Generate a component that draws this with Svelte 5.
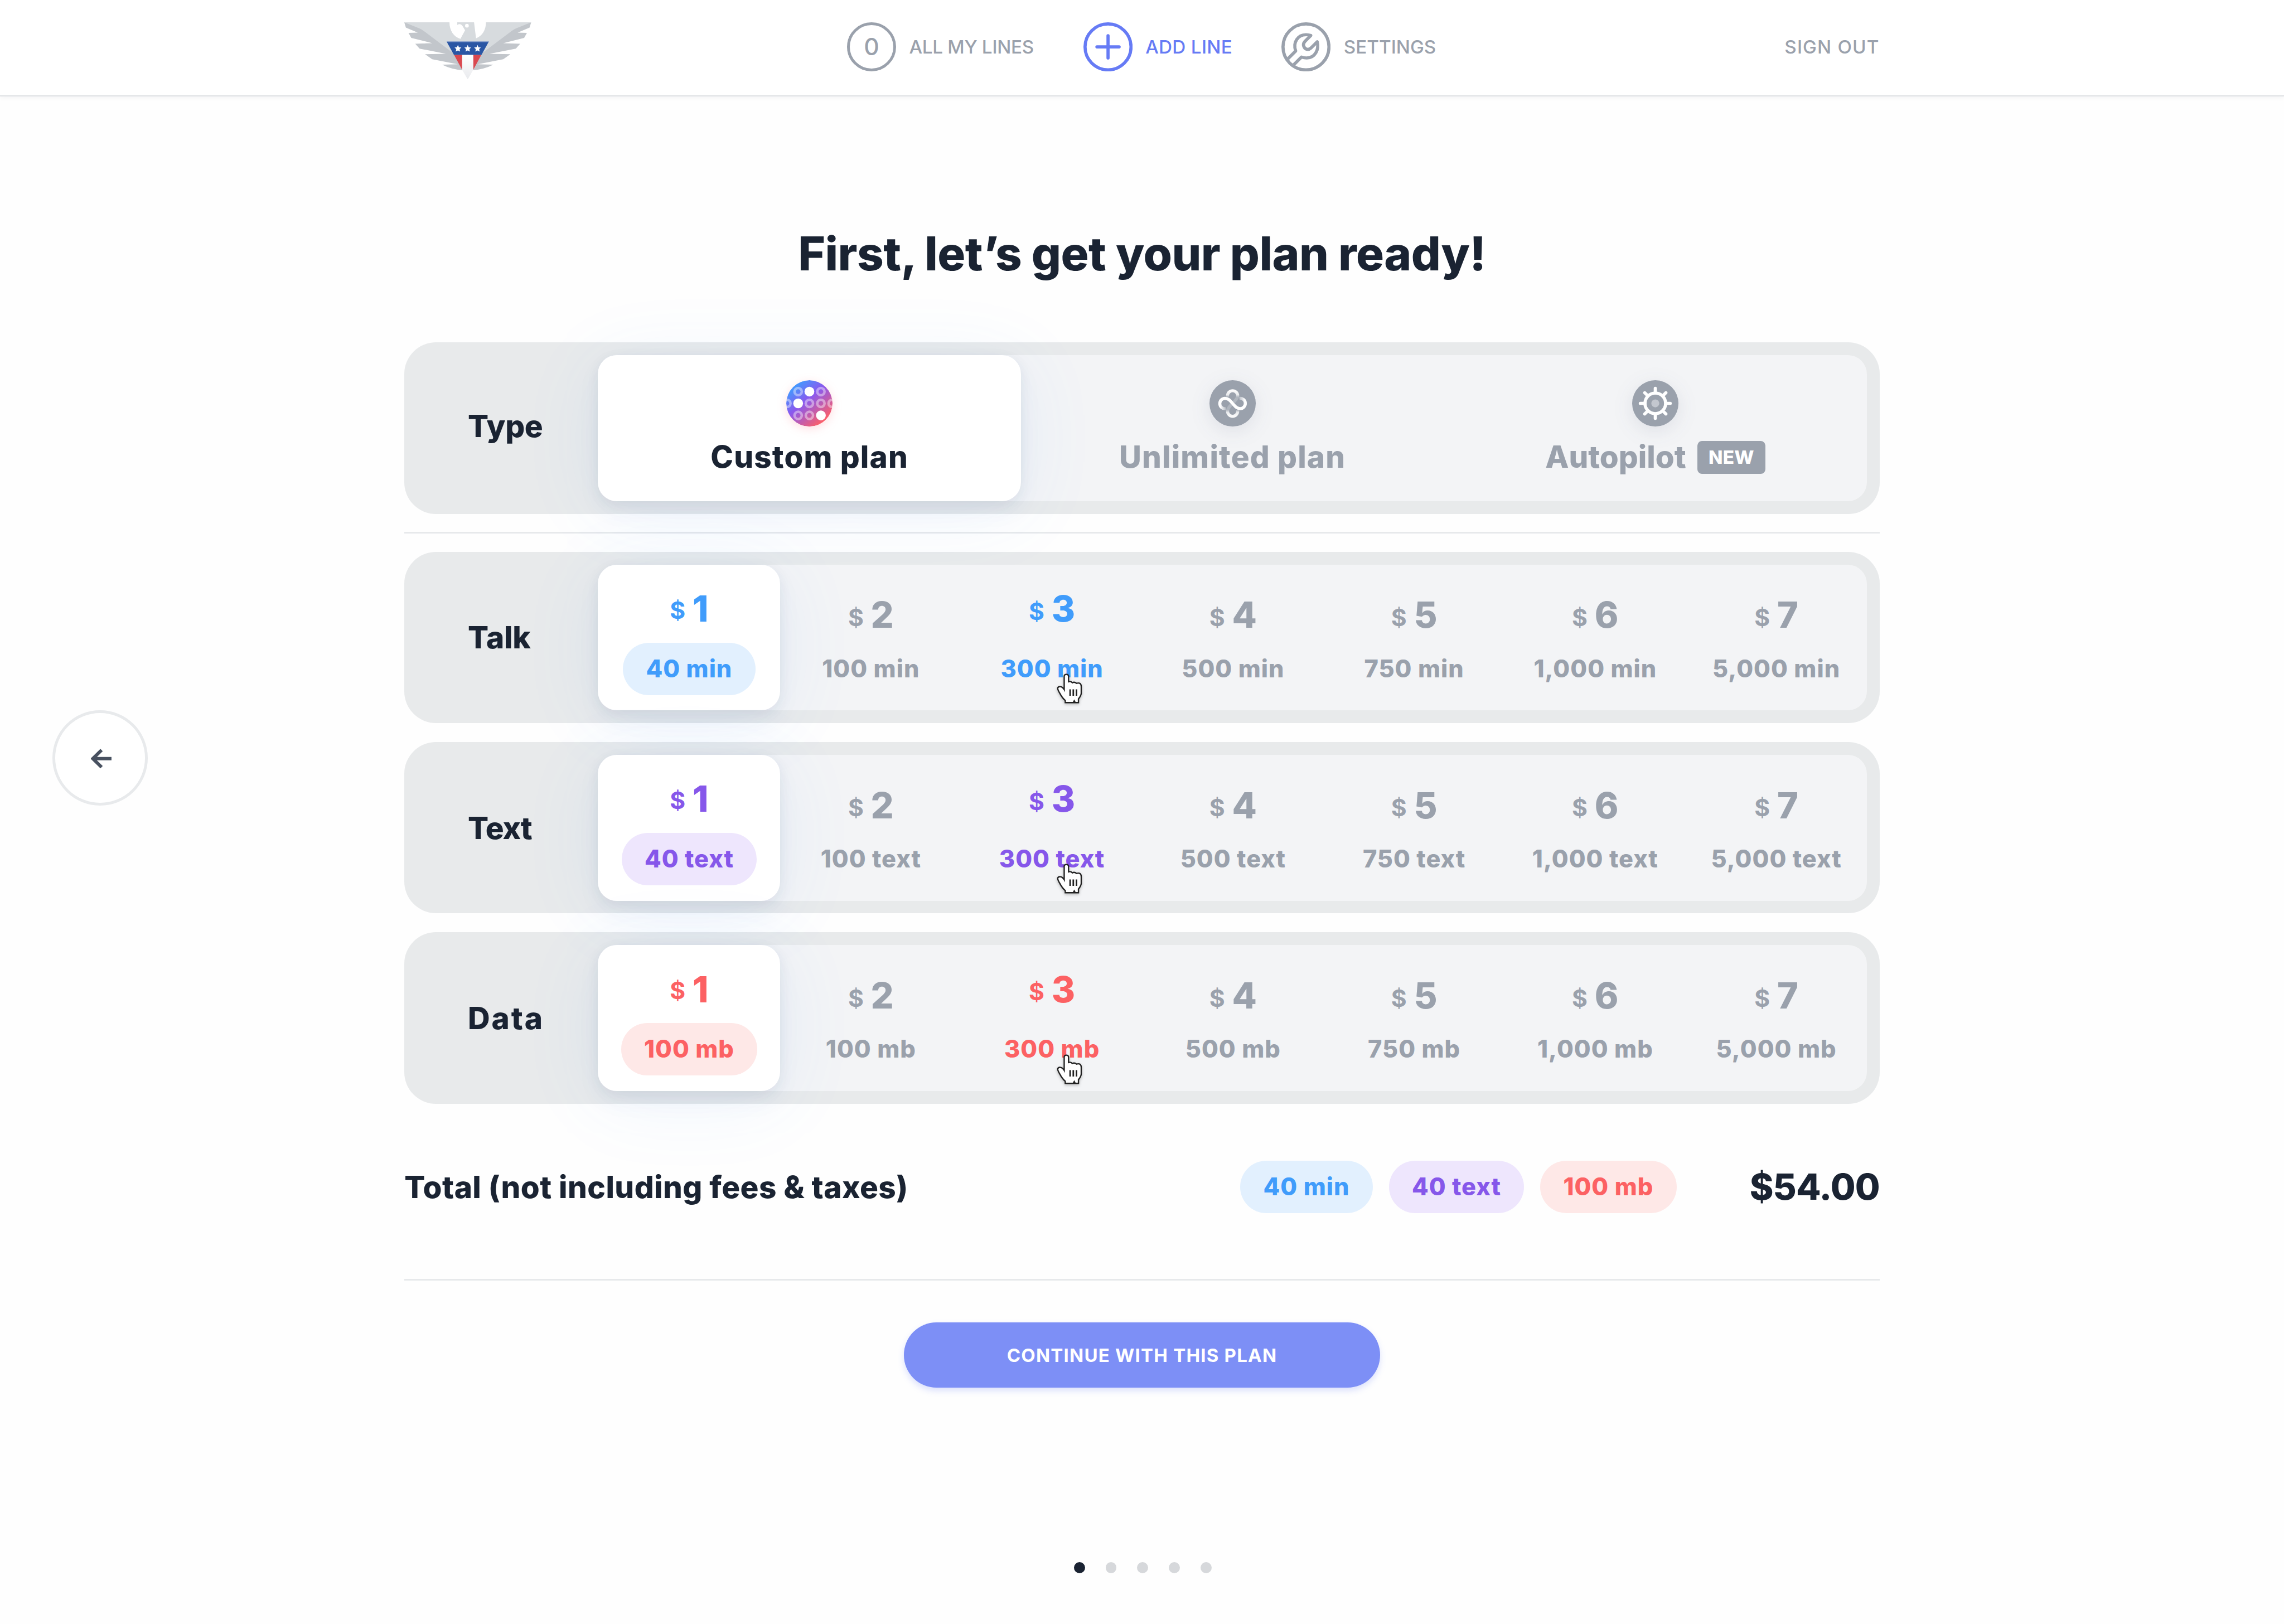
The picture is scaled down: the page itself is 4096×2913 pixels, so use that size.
<script>
  const amounts = ['100', '300', '500', '750', '1,000', '5,000'];

  const plans = [
    { name: 'Talk', tone: 'blue', unit: 'min', first: '40' },
    { name: 'Text', tone: 'purple', unit: 'text', first: '40' },
    { name: 'Data', tone: 'red', unit: 'mb', first: '100' }
  ].map((p) => ({
    ...p,
    options: [p.first, ...amounts].map((amount, i) => ({
      price: i + 1,
      label: `${amount} ${p.unit}`,
      selected: i === 0,
      hovered: i === 2
    }))
  }));

  const rings = [
    [160, 144], [332, 144], [75, 233], [245, 233],
    [332, 233], [417, 233], [160, 324], [245, 324]
  ];
  const discs = [[245, 144], [160, 233], [332, 324]];
  const spokes = [0, 45, 90, 135, 180, 225, 270, 315];
  const pages = [0, 1, 2, 3, 4];
</script>

<div class="page">
  <header>
    <div class="bar">
      <svg class="logo" viewBox="60 78 960 432">
        <defs>
          <linearGradient id="tail" x1="0" y1="0" x2="0" y2="1">
            <stop offset="0" stop-color="#fff" />
            <stop offset="1" stop-color="#e8eaed" />
          </linearGradient>
          <g id="feathers">
            <path d="M60 78 72 118 162 156 92 158 113 196 272 236 143 240 176 277 375 316 217 320 271 357 465 396 346 399Q415 434 500 441L540 330 190 120Z" />
          </g>
          <path id="star" d="M0-27 7.5-9.5 26-7.5 12.5 5 16.500 24 0 15-16.500 24-12.500 5-26-7.500-7.500-9.500Z" />
        </defs>
        <g fill="#c2c6cb">
          <use href="#feathers" />
          <use href="#feathers" transform="matrix(-1 0 0 1 1080 0)" />
        </g>
        <path fill="#d7dbde" d="M60 78H402C402 142 435 188 485 203L520 138 499 103Q484 84 461 98V78H588L603 199C652 180 678 135 678 78H1020L905 124Q890 130 870 145L660 304H420L210 145Q190 130 175 124Z" />
        <circle cx="534" cy="104" r="14" fill="#fff" />
        <path fill="#2a56a4" d="M380 224H700L644 325H436Z" />
        <path fill="#93a9d0" d="M380 222H700L698 228H382Z" />
        <path fill="#da484f" d="M437 325H498V438ZM582 325H643L582 438Z" />
        <path fill="url(#tail)" d="M498 325H582V438L540 510 498 438Z" />
        <g fill="#fff">
          <use href="#star" x="466" y="276" />
          <use href="#star" x="540" y="276" />
          <use href="#star" x="614" y="276" />
        </g>
      </svg>
      <nav>
        <a class="lines"><span class="count">0</span>ALL MY LINES</a>
        <a class="add">
          <svg viewBox="0 0 31 31">
            <circle cx="15.500" cy="15.500" r="14.500" />
            <path d="M15.500 8.500v14M8.500 15.500h14" stroke-linecap="round" />
          </svg>
          ADD LINE
        </a>
        <a class="settings">
          <svg viewBox="36 24 372 372">
            <g stroke-width="24" stroke-linejoin="round">
              <circle cx="222" cy="210" r="174" />
              <path d="M85 300 144 241C122 178 158 118 222 118Q242 118 258 124L213 170C192 194 208 229 237 229Q248 229 258 220L307 172C322 232 290 293 228 294Q208 294 188 287L130 345" />
            </g>
          </svg>
          SETTINGS
        </a>
      </nav>
      <a class="signout">SIGN OUT</a>
    </div>
  </header>

  <button class="back" aria-label="Back">
    <svg viewBox="0 0 13 12"><path d="M12.500 6H1.500M6.500 .8 1.200 6 6.500 11.200" /></svg>
  </button>

  <main>
    <h1>First, let’s get your plan ready!</h1>

    <section class="row type">
      <h2>Type</h2>
      <div class="track">
        <div class="kind selected">
          <svg class="icon custom" viewBox="70 58 350 350">
            <defs>
              <linearGradient id="mix" gradientUnits="userSpaceOnUse" x1="125" y1="95" x2="355" y2="370">
                <stop offset="0" stop-color="#3f9dff" />
                <stop offset=".42" stop-color="#8a59ee" />
                <stop offset="1" stop-color="#fd6068" />
              </linearGradient>
              <clipPath id="disc"><circle cx="245" cy="233" r="175" /></clipPath>
            </defs>
            <g clip-path="url(#disc)">
              <circle cx="245" cy="233" r="175" fill="url(#mix)" />
              {#each rings as [x, y]}
                <circle cx={x} cy={y} r="27.500" fill="none" stroke="#fff" stroke-opacity=".42" stroke-width="19" />
              {/each}
              {#each discs as [x, y]}
                <circle cx={x} cy={y} r="37" fill="#fff" />
              {/each}
            </g>
          </svg>
          <div class="name custom-name">Custom plan</div>
        </div>

        <div class="kind">
          <svg class="icon" viewBox="53 58 350 350">
            <defs>
              <linearGradient id="vert" gradientUnits="userSpaceOnUse" x1="0" y1="137" x2="0" y2="331">
                <stop offset="0" stop-color="#fff" stop-opacity=".95" />
                <stop offset=".15" stop-color="#fff" stop-opacity=".8" />
                <stop offset=".25" stop-color="#fff" stop-opacity=".22" />
                <stop offset=".75" stop-color="#fff" stop-opacity=".22" />
                <stop offset=".85" stop-color="#fff" stop-opacity=".8" />
                <stop offset="1" stop-color="#fff" stop-opacity=".95" />
              </linearGradient>
              <linearGradient id="fadeLeft" gradientUnits="userSpaceOnUse" x1="135" y1="0" x2="178" y2="0">
                <stop offset="0" stop-color="#fff" />
                <stop offset="1" stop-color="#fff" stop-opacity=".3" />
              </linearGradient>
              <linearGradient id="fadeRight" gradientUnits="userSpaceOnUse" x1="320" y1="0" x2="277" y2="0">
                <stop offset="0" stop-color="#fff" />
                <stop offset="1" stop-color="#fff" stop-opacity=".3" />
              </linearGradient>
            </defs>
            <circle cx="228" cy="233" r="175" fill="#9aa1ac" />
            <g fill="none" stroke-width="23">
              <path stroke="url(#vert)" d="M189.500 182V176A38.500 38.500 0 0 1 266.500 176C266.500 212 189.500 250 189.500 292A38.500 38.500 0 0 0 266.500 292V286" />
              <path stroke="url(#fadeLeft)" d="M131 234A39 39 0 0 0 176 273" />
              <path stroke="url(#fadeRight)" d="M324 234A39 39 0 0 0 279 195" />
              <path stroke="#fff" d="M131 236V234A39 39 0 0 1 170 195C202 195 215 220 228 234C242 249 256 273 285 273A39 39 0 0 0 324 234V232" />
            </g>
          </svg>
          <div class="name unlimited-name">Unlimited plan</div>
        </div>

        <div class="kind">
          <svg class="icon" viewBox="62 59 350 350">
            <circle cx="237" cy="234" r="175" fill="#9aa1ac" />
            <circle cx="237" cy="234" r="30" fill="#c3c7cf" />
            <g fill="none" stroke="#fff" stroke-width="24" stroke-linecap="round">
              <circle cx="237" cy="234" r="78" />
              {#each spokes as angle}
                <path d="M237 154V121" transform="rotate({angle} 237 234)" />
              {/each}
            </g>
          </svg>
          <div class="name">Autopilot<span class="badge">NEW</span></div>
        </div>
      </div>
    </section>

    <hr />

    {#each plans as plan}
      <section class="row {plan.tone}">
        <h2>{plan.name}</h2>
        <div class="track">
          {#each plan.options as option}
            <div class="option" class:selected={option.selected} class:hovered={option.hovered}>
              <div class="price"><span class="sign">$</span>{option.price}</div>
              <div class="amount">{option.label}</div>
              {#if option.hovered}
                <svg class="cursor" viewBox="0 0 300 300">
                  <path d="M99 152V52C99 31 132 31 132 52V92Q150 86 161 100Q176 91 192 104Q228 94 228 130V180Q226 200 207 222V250H107V234Q84 215 66 180Q48 150 50 139C56 125 82 122 99 152Z" fill="#fff" stroke="#222" stroke-width="10" />
                  <path d="M144 150V198M168 150V198M192 150V198" stroke="#222" stroke-width="12" />
                  <path d="M175 226 188 250H162Z" fill="#222" />
                </svg>
              {/if}
            </div>
          {/each}
        </div>
      </section>
    {/each}

    <section class="total">
      <div class="caption">Total (not including fees &amp; taxes)</div>
      {#each plans as plan}
        <span class="pill {plan.tone}">{plan.options[0].label}</span>
      {/each}
      <div class="sum">$54.00</div>
    </section>

    <hr class="last" />

    <button class="continue">CONTINUE WITH THIS PLAN</button>

    <div class="dots">
      {#each pages as page}
        <i class:current={page === 0}></i>
      {/each}
    </div>
  </main>
</div>

<style>
  /* 1rem is ten units of a 1440-wide layout */
  :global(html) { font-size: calc(100vw / 144); }
  :global(body) { background: #fefefe; overflow: hidden; }

  .page {
    position: relative;
    height: 100vh;
    box-sizing: border-box;
    font-family: Inter, "Open Sans", sans-serif;
    color: #1a2332;
    background: #fefefe;
    overflow: hidden;
  }

  header {
    background: #fff;
    border-bottom: .1rem solid #dfe1e4;
    box-shadow: 0 .1rem .3rem rgba(26, 35, 50, .04);
  }
  .bar {
    width: 93rem;
    height: 6rem;
    margin: 0 auto;
    padding-bottom: .1rem;
    box-sizing: border-box;
    display: flex;
    align-items: center;
  }
  .logo { width: 8rem; height: 3.6rem; align-self: flex-start; margin-top: 1.4rem; }
  nav { display: flex; margin-left: 19.9rem; }
  a {
    display: flex;
    align-items: center;
    gap: .82rem;
    font-size: 1.17rem;
    font-weight: 500;
    color: #9aa1ac;
    white-space: nowrap;
  }
  nav svg { width: 3.1rem; height: 3.1rem; fill: none; stroke: currentColor; stroke-width: 2; }
  .lines { width: 14.9rem; letter-spacing: -.01rem; }
  .add { width: 12.5rem; color: #667bf5; letter-spacing: .01rem; }
  .count {
    width: 3.1rem;
    height: 3.1rem;
    box-sizing: border-box;
    border: .2rem solid;
    border-radius: 50%;
    display: grid;
    place-items: center;
    font-size: 1.5rem;
  }
  .signout { margin-left: auto; letter-spacing: .04rem; }

  .back {
    position: absolute;
    left: 3.3rem;
    top: 44.8rem;
    width: 6rem;
    height: 6rem;
    padding: 0;
    border: .2rem solid #e8eaec;
    border-radius: 50%;
    background: #fff;
    display: grid;
    place-items: center;
  }
  .back svg {
    width: 1.35rem;
    height: 1.25rem;
    margin: .1rem 0 0 .2rem;
    fill: none;
    stroke: #485160;
    stroke-width: 2;
  }

  main { width: 93rem; margin: 0 auto; padding-top: 7.93rem; }
  h1 {
    margin: 0 0 3.6rem;
    font-size: 2.93rem;
    line-height: 4rem;
    font-weight: 800;
    text-align: center;
    letter-spacing: -.02rem;
  }

  .row {
    display: flex;
    align-items: center;
    height: 10.8rem;
    margin-bottom: 1.2rem;
    padding-right: .8rem;
    box-sizing: border-box;
    border-radius: 2rem;
    background: rgba(26, 42, 52, .093);
  }
  .row.type { margin-bottom: 0; }
  h2 {
    width: 12.2rem;
    padding-left: 4rem;
    margin: 0;
    box-sizing: border-box;
    font-size: 1.93rem;
    font-weight: 800;
    line-height: 2.4rem;
    letter-spacing: -.01rem;
  }
  .type h2 { padding-bottom: .3rem; }
  .purple h2 { letter-spacing: -.04rem; }
  .red h2 { letter-spacing: .1rem; }
  .track {
    flex: 1;
    display: flex;
    height: 9.2rem;
    border-radius: 1.2rem;
    background: rgba(253, 253, 255, .54);
  }
  .track > * { flex: 1 1 0; min-width: 0; box-sizing: border-box; border-radius: 1.2rem; }
  .track > .selected {
    background: #fff;
    box-shadow:
      0 .2rem .8rem rgba(26, 45, 70, .06),
      0 .6rem 1.6rem rgba(50, 70, 130, .045),
      0 .6rem 5rem rgba(64, 156, 251, .085);
  }

  .kind {
    display: flex;
    flex-direction: column;
    align-items: center;
    padding-top: 1.58rem;
    color: #9aa1ac;
  }
  .kind.selected { color: #1a2332; }
  .icon {
    width: 2.92rem;
    height: 2.92rem;
    overflow: visible;
    filter: drop-shadow(0 .3rem .6rem rgba(50, 60, 100, .1));
  }
  .icon.custom { filter: drop-shadow(0 .15rem .3rem rgba(253, 96, 104, .2)); }
  .name {
    display: flex;
    align-items: center;
    margin-top: .7rem;
    font-size: 1.93rem;
    line-height: 2.4rem;
    font-weight: 800;
    letter-spacing: 0;
  }
  .custom-name, .unlimited-name { letter-spacing: .04rem; }
  .badge {
    width: 4.3rem;
    height: 2.1rem;
    margin: .1rem 0 0 .7rem;
    border-radius: .3rem;
    background: #9aa1ac;
    color: #fff;
    font-size: 1.17rem;
    line-height: 2.1rem;
    text-align: center;
    letter-spacing: .01rem;
  }

  hr {
    height: .1rem;
    margin: 1.15rem 0;
    border: 0;
    background: #e7e9eb;
  }

  .option {
    position: relative;
    display: flex;
    flex-direction: column;
    align-items: center;
    padding-top: 2rem;
    color: #9aa1ac;
  }
  .option.selected { flex: 0 0 11.5rem; }
  .price { height: 2.4rem; font-size: 2.27rem; line-height: 2.4rem; font-weight: 800; }
  .sign {
    position: relative;
    top: -.12rem;
    margin-right: .45rem;
    font-size: 1.5rem;
    line-height: 1;
    font-weight: 700;
  }
  .selected .sign { top: -.19rem; }
  .amount, .pill {
    height: 3.3rem;
    padding: 0 1.45rem;
    border-radius: 1.65rem;
    font-size: 1.52rem;
    line-height: 3.3rem;
    font-weight: 800;
    letter-spacing: .035rem;
    white-space: nowrap;
  }
  .amount { margin-top: .53rem; }
  .option.selected, .option.hovered { padding-top: 1.6rem; }
  .option.selected .amount, .option.hovered .amount { margin-top: .93rem; }

  .blue .selected, .blue .hovered, .pill.blue { color: #409cfb; }
  .purple .selected, .purple .hovered, .pill.purple { color: #8657ea; }
  .red .selected, .red .hovered, .pill.red { color: #fc6163; }
  .blue .selected .amount, .pill.blue { background: #e2f0fe; }
  .purple .selected .amount, .pill.purple { background: #eee6fd; }
  .red .selected .amount, .pill.red { background: #fee8e7; }

  .cursor {
    position: absolute;
    left: 5.65rem;
    top: 6.62rem;
    width: 2.5rem;
    height: 2.5rem;
    filter: drop-shadow(0 .1rem .1rem rgba(0, 0, 0, .25));
  }

  .total {
    display: flex;
    align-items: center;
    height: 3.3rem;
    margin-top: 3.6rem;
  }
  .caption {
    flex: 1;
    font-size: 1.93rem;
    font-weight: 800;
    letter-spacing: .015rem;
    white-space: nowrap;
  }
  .total .pill + .pill { margin-left: 1.02rem; }
  .sum {
    width: 12.8rem;
    text-align: right;
    font-size: 2.28rem;
    font-weight: 800;
    letter-spacing: -.03rem;
  }

  hr.last { margin: 4.15rem 0 2.65rem; }

  .continue {
    display: block;
    width: 30rem;
    height: 4.1rem;
    margin: 0 auto;
    padding: 0;
    border: 0;
    border-radius: 2.05rem;
    background: #7d8ff6;
    box-shadow: 0 .2rem .4rem rgba(102, 123, 245, .22);
    color: #fff;
    font: 700 1.16rem/4.2rem Inter, "Open Sans", sans-serif;
    letter-spacing: .043rem;
  }

  .dots { display: flex; justify-content: center; gap: 1.3rem; margin: 11rem 0 0 .1rem; }
  .dots i { width: .7rem; height: .7rem; border-radius: 50%; background: #d6d8db; }
  .dots .current { background: #1a2332; }
</style>
